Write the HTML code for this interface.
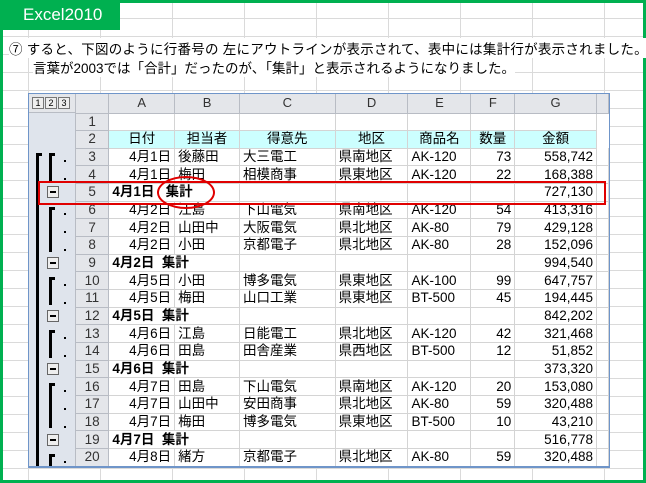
<!DOCTYPE html>
<html><head><meta charset="utf-8"><style>
*{margin:0;padding:0;box-sizing:border-box}
body{width:646px;height:483px;overflow:hidden;background:#fff;position:relative;font-family:"Liberation Sans","Noto Sans CJK JP",sans-serif}
.bg{position:absolute;left:0;top:0;width:646px;height:483px;
background-image:linear-gradient(to right,#dadada 1px,transparent 1px),linear-gradient(to bottom,#dadada 1px,transparent 1px);
background-size:72px 18px;background-position:28px 0,0 0}
.frame{position:absolute;left:0;top:0;width:646px;height:483px;border:3px solid #00b050;border-top-width:3px}
.tab{position:absolute;left:0;top:0;width:120px;height:30px;background:#00b050;color:#fff;font-size:17px;line-height:30px;padding-left:23px}
.t{position:absolute;font-size:13.5px;color:#000;white-space:nowrap;background:#fff}
.shot{position:absolute;left:28px;top:93px;width:582px;height:375px;border:1px solid #6f95c9;border-bottom:2px solid #6f95c9;overflow:hidden;background:#fff}
table{border-collapse:collapse;position:absolute;left:47px;top:0;table-layout:fixed;font-size:13.5px}
td{height:17.67px;border-right:1px solid #d4d4d4;border-bottom:1px solid #d4d4d4;padding:0 3px;white-space:nowrap;overflow:hidden;line-height:16px}
tr.h td{height:19px;background:#e4e6ea;border-color:#b8bcc4;text-align:center;color:#333;font-size:13px}
td.rh{background:#e4e6ea;border-color:#b8bcc4;text-align:center;color:#333;padding:0}
.c{text-align:center}.r{text-align:right}.b{font-weight:bold}
tr.cy td:not(.rh){background:#ccffff}
.ol{position:absolute;left:0;top:19px;width:47px;height:360px;background:#dfe4ec;border-right:1px solid #b8bcc4}
.btn{position:absolute;top:3px;width:12px;height:12px;border:1px solid #777;background:#eee;font-size:9px;line-height:10px;text-align:center}
.v{position:absolute;background:#000;width:3px}
.hz{position:absolute;background:#000;height:3px;width:6px}
.m{position:absolute;left:18px;width:12px;height:12px;border:1px solid #666;background:#eee}
.m:after{content:"";position:absolute;left:2px;top:4px;width:6px;height:2px;background:#000}
.dot{position:absolute;left:35px;width:2px;height:2px;background:#000}
</style></head><body>
<div class="bg"></div>
<div class="tab">Excel2010</div>
<div class="frame"></div>
<div class="t" style="left:9px;top:38px;letter-spacing:0.25px">⑦ すると、下図のように行番号の 左にアウトラインが表示されて、表中には集計行が表示されました。</div>
<div class="t" style="left:33px;top:57px">言葉が2003では「合計」だったのが、「集計」と表示されるようになりました。</div>
<div class="shot">
<div class="ol"></div>
<div style="position:absolute;left:0;top:0;width:47px;height:19px;background:#e4e6ea;border-right:1px solid #b8bcc4;border-bottom:1px solid #b8bcc4"></div>
<div class="btn" style="left:3px">1</div><div class="btn" style="left:16px">2</div><div class="btn" style="left:29px">3</div>
<table>
<colgroup><col style="width:33px"><col style="width:66px"><col style="width:65px"><col style="width:96px"><col style="width:73px"><col style="width:63px"><col style="width:44px"><col style="width:82px"><col style="width:12px"></colgroup>
<tr class="h"><td></td><td>A</td><td>B</td><td>C</td><td>D</td><td>E</td><td>F</td><td>G</td><td></td></tr>
<tr><td class="rh">1</td><td></td><td></td><td></td><td></td><td></td><td></td><td></td><td style="border:none;background:#fff"></td></tr>
<tr class="cy"><td class="rh">2</td><td class="c">日付</td><td class="c">担当者</td><td class="c">得意先</td><td class="c">地区</td><td class="c">商品名</td><td class="c">数量</td><td class="c">金額</td><td style="background:#fff;border:none"></td></tr>
<tr><td class="rh">3</td><td class="r">4月1日</td><td>後藤田</td><td>大三電工</td><td>県南地区</td><td>AK-120</td><td class="r">73</td><td class="r">558,742</td><td></td></tr>
<tr><td class="rh">4</td><td class="r">4月1日</td><td>梅田</td><td>相模商事</td><td>県東地区</td><td>AK-120</td><td class="r">22</td><td class="r">168,388</td><td></td></tr>
<tr><td class="rh">5</td><td class="b" colspan="2">4月1日 &nbsp;&nbsp;集計</td><td></td><td></td><td></td><td></td><td class="r">727,130</td><td></td></tr>
<tr><td class="rh">6</td><td class="r">4月2日</td><td>江島</td><td>下山電気</td><td>県南地区</td><td>AK-120</td><td class="r">54</td><td class="r">413,316</td><td></td></tr>
<tr><td class="rh">7</td><td class="r">4月2日</td><td>山田中</td><td>大阪電気</td><td>県北地区</td><td>AK-80</td><td class="r">79</td><td class="r">429,128</td><td></td></tr>
<tr><td class="rh">8</td><td class="r">4月2日</td><td>小田</td><td>京都電子</td><td>県北地区</td><td>AK-80</td><td class="r">28</td><td class="r">152,096</td><td></td></tr>
<tr><td class="rh">9</td><td class="b" colspan="2">4月2日 &nbsp;集計</td><td></td><td></td><td></td><td></td><td class="r">994,540</td><td></td></tr>
<tr><td class="rh">10</td><td class="r">4月5日</td><td>小田</td><td>博多電気</td><td>県東地区</td><td>AK-100</td><td class="r">99</td><td class="r">647,757</td><td></td></tr>
<tr><td class="rh">11</td><td class="r">4月5日</td><td>梅田</td><td>山口工業</td><td>県東地区</td><td>BT-500</td><td class="r">45</td><td class="r">194,445</td><td></td></tr>
<tr><td class="rh">12</td><td class="b" colspan="2">4月5日 &nbsp;集計</td><td></td><td></td><td></td><td></td><td class="r">842,202</td><td></td></tr>
<tr><td class="rh">13</td><td class="r">4月6日</td><td>江島</td><td>日能電工</td><td>県北地区</td><td>AK-120</td><td class="r">42</td><td class="r">321,468</td><td></td></tr>
<tr><td class="rh">14</td><td class="r">4月6日</td><td>田島</td><td>田舎産業</td><td>県西地区</td><td>BT-500</td><td class="r">12</td><td class="r">51,852</td><td></td></tr>
<tr><td class="rh">15</td><td class="b" colspan="2">4月6日 &nbsp;集計</td><td></td><td></td><td></td><td></td><td class="r">373,320</td><td></td></tr>
<tr><td class="rh">16</td><td class="r">4月7日</td><td>田島</td><td>下山電気</td><td>県南地区</td><td>AK-120</td><td class="r">20</td><td class="r">153,080</td><td></td></tr>
<tr><td class="rh">17</td><td class="r">4月7日</td><td>山田中</td><td>安田商事</td><td>県北地区</td><td>AK-80</td><td class="r">59</td><td class="r">320,488</td><td></td></tr>
<tr><td class="rh">18</td><td class="r">4月7日</td><td>梅田</td><td>博多電気</td><td>県東地区</td><td>BT-500</td><td class="r">10</td><td class="r">43,210</td><td></td></tr>
<tr><td class="rh">19</td><td class="b" colspan="2">4月7日 &nbsp;集計</td><td></td><td></td><td></td><td></td><td class="r">516,778</td><td></td></tr>
<tr><td class="rh">20</td><td class="r">4月8日</td><td>緒方</td><td>京都電子</td><td>県北地区</td><td>AK-80</td><td class="r">59</td><td class="r">320,488</td><td></td></tr>
</table>
<div class="v" style="left:7px;top:59px;height:330px"></div><div class="hz" style="left:7px;top:59px"></div>
<div class="v" style="left:20px;top:59px;height:28px"></div><div class="hz" style="left:20px;top:59px"></div>
<div class="m" style="top:92px"></div>
<div class="v" style="left:20px;top:113px;height:45px"></div><div class="hz" style="left:20px;top:113px"></div>
<div class="m" style="top:163px"></div>
<div class="v" style="left:20px;top:183px;height:28px"></div><div class="hz" style="left:20px;top:183px"></div>
<div class="m" style="top:216px"></div>
<div class="v" style="left:20px;top:236px;height:28px"></div><div class="hz" style="left:20px;top:236px"></div>
<div class="m" style="top:269px"></div>
<div class="v" style="left:20px;top:289px;height:45px"></div><div class="hz" style="left:20px;top:289px"></div>
<div class="m" style="top:340px"></div>
<div class="v" style="left:20px;top:360px;height:20px"></div><div class="hz" style="left:20px;top:360px"></div>
<div class="dot" style="top:66px"></div><div class="dot" style="top:84px"></div>
<div class="dot" style="top:119px"></div><div class="dot" style="top:137px"></div><div class="dot" style="top:155px"></div>
<div class="dot" style="top:190px"></div><div class="dot" style="top:208px"></div>
<div class="dot" style="top:243px"></div><div class="dot" style="top:261px"></div>
<div class="dot" style="top:296px"></div><div class="dot" style="top:314px"></div><div class="dot" style="top:332px"></div>
<div class="dot" style="top:367px"></div>
</div>
<div style="position:absolute;left:38px;top:181px;width:568px;height:24px;border:2px solid #e00000"></div>
<div style="position:absolute;left:157px;top:176px;width:58px;height:33px;border:2px solid #e00000;border-radius:50%"></div>
</body></html>
